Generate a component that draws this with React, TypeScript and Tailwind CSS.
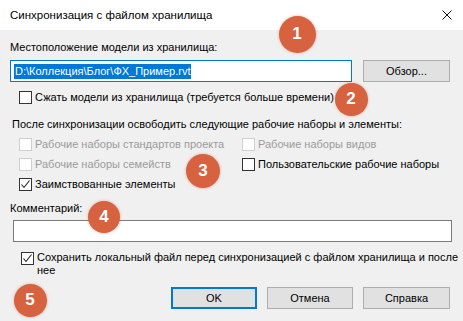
import React from "react";

const font = { fontFamily: '"Liberation Sans", Arial, sans-serif' };

function Box({ checked = false, disabled = false }: { checked?: boolean; disabled?: boolean }) {
  return (
    <span
      className={
        "relative inline-block w-[13px] h-[13px] shrink-0 border bg-white " +
        (disabled ? "border-[#cfcfcf]" : "border-[#333333]")
      }
    >
      {checked && (
        <svg className="absolute left-0 top-0" width="11" height="11" viewBox="0 0 11 11">
          <polyline points="1.5,5.5 4,8.5 9.5,1.5" fill="none" stroke="#222" strokeWidth="1.1" />
        </svg>
      )}
    </span>
  );
}

function Check({
  label,
  checked,
  disabled,
}: {
  label: string;
  checked?: boolean;
  disabled?: boolean;
}) {
  return (
    <div className="flex items-center h-[20px] gap-[3px] whitespace-nowrap">
      <Box checked={checked} disabled={disabled} />
      <span className={disabled ? "text-[#9b9b9b]" : "text-black"}>{label}</span>
    </div>
  );
}

function Badge({ n, x, y, d }: { n: number; x: number; y: number; d: number }) {
  return (
    <div
      className="absolute rounded-full bg-[#d6623f] text-white font-bold flex items-center justify-center text-[17px] shadow-[0_0_3px_rgba(214,98,63,0.5)]"
      style={{ left: x - d / 2, top: y - d / 2, width: d, height: d, fontFamily: '"Liberation Sans", Arial, sans-serif' }}
    >
      {n}
    </div>
  );
}

function Btn({ children, def = false, w = 86 }: { children: React.ReactNode; def?: boolean; w?: number }) {
  return (
    <div
      className={
        "h-[22px] flex items-center justify-center bg-[#e1e1e1] text-black " +
        (def ? "border-2 border-[#0078d7] w-[86px]" : w === 87 ? "border border-[#adadad] w-[87px]" : "border border-[#adadad] w-[86px]")
      }
    >
      {children}
    </div>
  );
}

export default function App() {
  return (
    <div className="relative w-[463px] h-[321px] overflow-hidden bg-[#f0f0f0] text-[11px] text-black whitespace-nowrap" style={font}>
      <div className="h-[30px] bg-white flex items-center justify-between pl-[10px] pr-[11px]">
        <span className="text-[11.5px] pt-[2px]">Синхронизация с файлом хранилища</span>
        <svg width="10" height="10" viewBox="0 0 10 10">
          <path d="M0.5 0.5 L9.5 9.5 M9.5 0.5 L0.5 9.5" stroke="#111" strokeWidth="1" />
        </svg>
      </div>

      <div className="pl-[10px] leading-[16px]">
        <div className="mt-[9px] h-[16px]">Местоположение модели из хранилища:</div>
        <div className="mt-[5px] flex h-[22px]">
          <div className="w-[342px] h-[22px] border border-[#0078d7] bg-white flex items-center pl-[3px]">
            <span className="bg-[#0078d7] text-white leading-[15px] px-[1px]">D:\Коллекция\Блог\ФХ_Пример.rvt</span>
          </div>
          <div className="ml-[11px] w-[87px] h-[22px] flex items-center justify-center bg-[#e1e1e1] border border-[#adadad]">
            Обзор...
          </div>
        </div>
        <div className="mt-[7px] pl-[9px] flex items-center h-[16px] gap-[3px]">
          <Box />
          <span>Сжать модели из хранилища (требуется больше времени)</span>
        </div>
        <div className="mt-[11px] ml-[2px] h-[16px]">
          После синхронизации освободить следующие рабочие наборы и элементы:
        </div>
        <div className="mt-[2px] pl-[9px] grid grid-cols-[223px_1fr]">
          <Check label="Рабочие наборы стандартов проекта" disabled />
          <Check label="Рабочие наборы видов" disabled />
          <Check label="Рабочие наборы семейств" disabled />
          <Check label="Пользовательские рабочие наборы" />
          <Check label="Заимствованные элементы" checked />
        </div>
        <div className="mt-[6px] h-[16px]">Комментарий:</div>
        <div className="mt-[4px] ml-[3px] w-[439px] h-[22px] border border-[#7a7a7a] bg-white" />
        <div className="mt-[9px] pl-[11px] flex items-start gap-[3px] leading-[13px]">
          <span className="mt-[1px]">
            <Box checked />
          </span>
          <span>
            Сохранить локальный файл перед синхронизацией с файлом хранилища и после
            <br />
            нее
          </span>
        </div>
      </div>

      <div className="mt-[10px] pr-[13px] flex justify-end gap-[10px]">
        <Btn def>OK</Btn>
        <Btn>Отмена</Btn>
        <Btn w={87}>Справка</Btn>
      </div>

      <Badge n={1} x={297} y={34} d={37} />
      <Badge n={2} x={351} y={99} d={33} />
      <Badge n={3} x={203} y={171} d={34} />
      <Badge n={4} x={104} y={217} d={32} />
      <Badge n={5} x={30} y={300} d={33} />
    </div>
  );
}
